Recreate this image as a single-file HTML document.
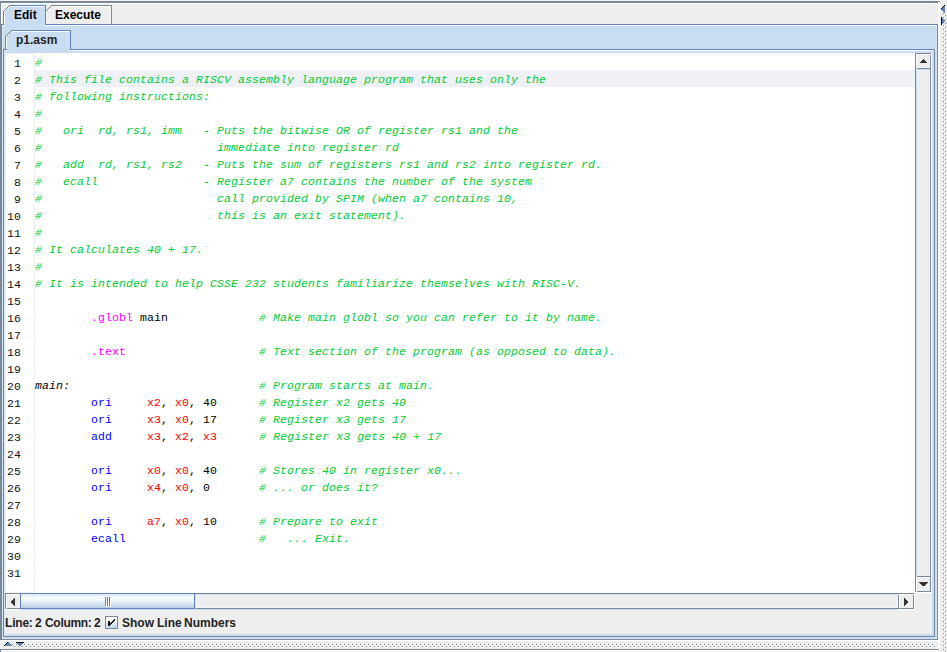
<!DOCTYPE html>
<html><head><meta charset="utf-8"><style>
html,body{margin:0;padding:0}
body{width:947px;height:652px;overflow:hidden;position:relative;background:#eeeeee}
i{position:absolute;display:block}
b{font-weight:normal}
.ln{position:absolute;height:17px;line-height:17px;font:11.5px "Liberation Mono",monospace;letter-spacing:0.099px;color:#111;white-space:pre}
.cl{position:absolute;left:35px;height:17px;line-height:17px;font:11.5px "Liberation Mono",monospace;letter-spacing:0.099px;color:#000;white-space:pre}
.c{color:#00cc33;font-style:italic}
.n{color:#0000ff} .d{color:#ff00ff} .r{color:#ff0000} .l{color:#000;font-style:italic}
.st,.tb{position:absolute;font:bold 12px "Liberation Sans",sans-serif;color:#222;white-space:pre;line-height:24px}
</style></head><body>
<i style="left:0px;top:0px;width:947px;height:1px;background:#f4f3f1;"></i>
<i style="left:0px;top:1px;width:940px;height:1px;background:#7a8a99;"></i>
<i style="left:0px;top:2px;width:938px;height:1px;background:#7a8a99;"></i>
<i style="left:0px;top:1px;width:1px;height:639px;background:#7a8a99;"></i>
<i style="left:1px;top:3px;width:937px;height:1px;background:#ffffff;"></i>
<i style="left:1px;top:3px;width:1px;height:21px;background:#ffffff;"></i>
<i style="left:938px;top:2px;width:1px;height:648px;background:#ffffff;"></i>
<i style="left:939px;top:3px;width:1px;height:647px;background:#ffffff;"></i>
<i style="left:1px;top:24px;width:937px;height:616px;background:#c8ddf2;"></i>
<i style="left:1px;top:24px;width:4px;height:1px;background:#6382bf;"></i>
<i style="left:45px;top:24px;width:893px;height:1px;background:#6382bf;"></i>
<i style="left:1px;top:24px;width:1px;height:616px;background:#6382bf;"></i>
<i style="left:937px;top:24px;width:1px;height:616px;background:#7a8a99;"></i>
<i style="left:1px;top:639px;width:937px;height:1px;background:#7a8a99;"></i>
<i style="left:2px;top:25px;width:3px;height:1px;background:#ffffff;"></i>
<i style="left:45px;top:25px;width:892px;height:1px;background:#ffffff;"></i>
<i style="left:2px;top:26px;width:1px;height:613px;background:#dbe8f5;"></i>
<i style="left:936px;top:25px;width:1px;height:614px;background:#d0e3f7;"></i>
<i style="left:2px;top:638px;width:935px;height:1px;background:#d0e3f7;"></i>
<i style="left:3px;top:11px;width:1px;height:14px;background:#6382bf;"></i>
<i style="left:3px;top:11px;width:1px;height:1px;background:#6382bf;"></i>
<i style="left:4px;top:10px;width:1px;height:1px;background:#6382bf;"></i>
<i style="left:5px;top:9px;width:1px;height:1px;background:#6382bf;"></i>
<i style="left:6px;top:8px;width:1px;height:1px;background:#6382bf;"></i>
<i style="left:7px;top:7px;width:1px;height:1px;background:#6382bf;"></i>
<i style="left:8px;top:6px;width:1px;height:1px;background:#6382bf;"></i>
<i style="left:9px;top:5px;width:37px;height:1px;background:#6382bf;"></i>
<i style="left:45px;top:5px;width:1px;height:20px;background:#6382bf;"></i>
<i style="left:9px;top:6px;width:36px;height:1px;background:#c8ddf2;"></i>
<i style="left:8px;top:7px;width:37px;height:1px;background:#c8ddf2;"></i>
<i style="left:7px;top:8px;width:38px;height:1px;background:#c8ddf2;"></i>
<i style="left:6px;top:9px;width:39px;height:1px;background:#c8ddf2;"></i>
<i style="left:5px;top:10px;width:40px;height:1px;background:#c8ddf2;"></i>
<i style="left:4px;top:11px;width:41px;height:1px;background:#c8ddf2;"></i>
<i style="left:4px;top:12px;width:41px;height:1px;background:#c8ddf2;"></i>
<i style="left:4px;top:13px;width:41px;height:1px;background:#c8ddf2;"></i>
<i style="left:4px;top:14px;width:41px;height:1px;background:#c8ddf2;"></i>
<i style="left:4px;top:15px;width:41px;height:1px;background:#c8ddf2;"></i>
<i style="left:4px;top:16px;width:41px;height:1px;background:#c8ddf2;"></i>
<i style="left:4px;top:17px;width:41px;height:1px;background:#c8ddf2;"></i>
<i style="left:4px;top:18px;width:41px;height:1px;background:#c8ddf2;"></i>
<i style="left:4px;top:19px;width:41px;height:1px;background:#c8ddf2;"></i>
<i style="left:4px;top:20px;width:41px;height:1px;background:#c8ddf2;"></i>
<i style="left:4px;top:21px;width:41px;height:1px;background:#c8ddf2;"></i>
<i style="left:4px;top:22px;width:41px;height:1px;background:#c8ddf2;"></i>
<i style="left:4px;top:23px;width:41px;height:1px;background:#c8ddf2;"></i>
<i style="left:4px;top:24px;width:41px;height:1px;background:#c8ddf2;"></i>
<i style="left:9px;top:6px;width:36px;height:1px;background:#ffffff;"></i>
<i style="left:4px;top:11px;width:1px;height:13px;background:#ffffff;"></i>
<i style="left:4px;top:11px;width:1px;height:1px;background:#ffffff;"></i>
<i style="left:5px;top:10px;width:1px;height:1px;background:#ffffff;"></i>
<i style="left:6px;top:9px;width:1px;height:1px;background:#ffffff;"></i>
<i style="left:7px;top:8px;width:1px;height:1px;background:#ffffff;"></i>
<i style="left:8px;top:7px;width:1px;height:1px;background:#ffffff;"></i>
<i style="left:46px;top:10px;width:1px;height:1px;background:#7a8a99;"></i>
<i style="left:47px;top:9px;width:1px;height:1px;background:#7a8a99;"></i>
<i style="left:48px;top:8px;width:1px;height:1px;background:#7a8a99;"></i>
<i style="left:49px;top:7px;width:1px;height:1px;background:#7a8a99;"></i>
<i style="left:50px;top:6px;width:1px;height:1px;background:#7a8a99;"></i>
<i style="left:51px;top:5px;width:61px;height:1px;background:#7a8a99;"></i>
<i style="left:111px;top:5px;width:1px;height:19px;background:#7a8a99;"></i>
<i style="left:51px;top:6px;width:60px;height:1px;background:#ffffff;"></i>
<i style="left:46px;top:11px;width:1px;height:13px;background:#f8f8f8;"></i>
<i style="left:110px;top:6px;width:1px;height:18px;background:#f6f6f6;"></i>
<i style="left:3px;top:49px;width:4px;height:1px;background:#6382bf;"></i>
<i style="left:70px;top:49px;width:865px;height:1px;background:#6382bf;"></i>
<i style="left:3px;top:49px;width:1px;height:588px;background:#6382bf;"></i>
<i style="left:934px;top:49px;width:1px;height:588px;background:#7a8a99;"></i>
<i style="left:3px;top:636px;width:932px;height:1px;background:#7a8a99;"></i>
<i style="left:4px;top:50px;width:3px;height:1px;background:#ffffff;"></i>
<i style="left:70px;top:50px;width:864px;height:1px;background:#ffffff;"></i>
<i style="left:4px;top:51px;width:1px;height:585px;background:#dbe8f5;"></i>
<i style="left:5px;top:36px;width:1px;height:13px;background:#6382bf;"></i>
<i style="left:5px;top:36px;width:1px;height:1px;background:#6382bf;"></i>
<i style="left:6px;top:35px;width:1px;height:1px;background:#6382bf;"></i>
<i style="left:7px;top:34px;width:1px;height:1px;background:#6382bf;"></i>
<i style="left:8px;top:33px;width:1px;height:1px;background:#6382bf;"></i>
<i style="left:9px;top:32px;width:1px;height:1px;background:#6382bf;"></i>
<i style="left:10px;top:31px;width:1px;height:1px;background:#6382bf;"></i>
<i style="left:11px;top:30px;width:60px;height:1px;background:#6382bf;"></i>
<i style="left:70px;top:30px;width:1px;height:20px;background:#6382bf;"></i>
<i style="left:11px;top:31px;width:59px;height:1px;background:#c8ddf2;"></i>
<i style="left:10px;top:32px;width:60px;height:1px;background:#c8ddf2;"></i>
<i style="left:9px;top:33px;width:61px;height:1px;background:#c8ddf2;"></i>
<i style="left:8px;top:34px;width:62px;height:1px;background:#c8ddf2;"></i>
<i style="left:7px;top:35px;width:63px;height:1px;background:#c8ddf2;"></i>
<i style="left:6px;top:36px;width:64px;height:1px;background:#c8ddf2;"></i>
<i style="left:6px;top:37px;width:64px;height:1px;background:#c8ddf2;"></i>
<i style="left:6px;top:38px;width:64px;height:1px;background:#c8ddf2;"></i>
<i style="left:6px;top:39px;width:64px;height:1px;background:#c8ddf2;"></i>
<i style="left:6px;top:40px;width:64px;height:1px;background:#c8ddf2;"></i>
<i style="left:6px;top:41px;width:64px;height:1px;background:#c8ddf2;"></i>
<i style="left:6px;top:42px;width:64px;height:1px;background:#c8ddf2;"></i>
<i style="left:6px;top:43px;width:64px;height:1px;background:#c8ddf2;"></i>
<i style="left:6px;top:44px;width:64px;height:1px;background:#c8ddf2;"></i>
<i style="left:6px;top:45px;width:64px;height:1px;background:#c8ddf2;"></i>
<i style="left:6px;top:46px;width:64px;height:1px;background:#c8ddf2;"></i>
<i style="left:6px;top:47px;width:64px;height:1px;background:#c8ddf2;"></i>
<i style="left:6px;top:48px;width:64px;height:1px;background:#c8ddf2;"></i>
<i style="left:11px;top:31px;width:59px;height:1px;background:#ffffff;"></i>
<i style="left:6px;top:36px;width:1px;height:13px;background:#ffffff;"></i>
<i style="left:6px;top:36px;width:1px;height:1px;background:#ffffff;"></i>
<i style="left:7px;top:35px;width:1px;height:1px;background:#ffffff;"></i>
<i style="left:8px;top:34px;width:1px;height:1px;background:#ffffff;"></i>
<i style="left:9px;top:33px;width:1px;height:1px;background:#ffffff;"></i>
<i style="left:10px;top:32px;width:1px;height:1px;background:#ffffff;"></i>
<i style="left:5px;top:53px;width:927px;height:581px;background:#eeeeee;"></i>
<i style="left:5px;top:51px;width:929px;height:2px;background:#c8ddf2;"></i>
<i style="left:932px;top:51px;width:2px;height:585px;background:#c8ddf2;"></i>
<i style="left:5px;top:634px;width:929px;height:2px;background:#c8ddf2;"></i>
<i style="left:6px;top:51px;width:1px;height:2px;background:#c8ddf2;"></i>
<i style="left:5px;top:53px;width:910px;height:540px;background:#ffffff;"></i>
<i style="left:5px;top:53px;width:29px;height:1px;background:#f1efeb;"></i>
<i style="left:5px;top:592px;width:29px;height:1px;background:#f3f1ed;"></i>
<i style="left:5px;top:53px;width:1px;height:540px;background:#f3f1ed;"></i>
<i style="left:34px;top:53px;width:1px;height:540px;background:#eeeeee;"></i>
<i style="left:35px;top:70px;width:880px;height:17px;background:#eff1f6;"></i>
<div class=ln style="top:57px;left:14px">1</div>
<div class=ln style="top:74px;left:14px">2</div>
<div class=ln style="top:91px;left:14px">3</div>
<div class=ln style="top:108px;left:14px">4</div>
<div class=ln style="top:125px;left:14px">5</div>
<div class=ln style="top:142px;left:14px">6</div>
<div class=ln style="top:159px;left:14px">7</div>
<div class=ln style="top:176px;left:14px">8</div>
<div class=ln style="top:193px;left:14px">9</div>
<div class=ln style="top:210px;left:7px">10</div>
<div class=ln style="top:227px;left:7px">11</div>
<div class=ln style="top:244px;left:7px">12</div>
<div class=ln style="top:261px;left:7px">13</div>
<div class=ln style="top:278px;left:7px">14</div>
<div class=ln style="top:295px;left:7px">15</div>
<div class=ln style="top:312px;left:7px">16</div>
<div class=ln style="top:329px;left:7px">17</div>
<div class=ln style="top:346px;left:7px">18</div>
<div class=ln style="top:363px;left:7px">19</div>
<div class=ln style="top:380px;left:7px">20</div>
<div class=ln style="top:397px;left:7px">21</div>
<div class=ln style="top:414px;left:7px">22</div>
<div class=ln style="top:431px;left:7px">23</div>
<div class=ln style="top:448px;left:7px">24</div>
<div class=ln style="top:465px;left:7px">25</div>
<div class=ln style="top:482px;left:7px">26</div>
<div class=ln style="top:499px;left:7px">27</div>
<div class=ln style="top:516px;left:7px">28</div>
<div class=ln style="top:533px;left:7px">29</div>
<div class=ln style="top:550px;left:7px">30</div>
<div class=ln style="top:567px;left:7px">31</div>
<div class=cl style="top:56px"><b class=c>#</b></div>
<div class=cl style="top:73px"><b class=c># This file contains a RISCV assembly language program that uses only the</b></div>
<div class=cl style="top:90px"><b class=c># following instructions:</b></div>
<div class=cl style="top:107px"><b class=c>#</b></div>
<div class=cl style="top:124px"><b class=c>#   ori  rd, rs1, imm   - Puts the bitwise OR of register rs1 and the</b></div>
<div class=cl style="top:141px"><b class=c>#                         immediate into register rd</b></div>
<div class=cl style="top:158px"><b class=c>#   add  rd, rs1, rs2   - Puts the sum of registers rs1 and rs2 into register rd.</b></div>
<div class=cl style="top:175px"><b class=c>#   ecall               - Register a7 contains the number of the system</b></div>
<div class=cl style="top:192px"><b class=c>#                         call provided by SPIM (when a7 contains 10,</b></div>
<div class=cl style="top:209px"><b class=c>#                         this is an exit statement).</b></div>
<div class=cl style="top:226px"><b class=c>#</b></div>
<div class=cl style="top:243px"><b class=c># It calculates 40 + 17.</b></div>
<div class=cl style="top:260px"><b class=c>#</b></div>
<div class=cl style="top:277px"><b class=c># It is intended to help CSSE 232 students familiarize themselves with RISC-V.</b></div>
<div class=cl style="top:311px">        <b class=d>.globl</b> main             <b class=c># Make main globl so you can refer to it by name.</b></div>
<div class=cl style="top:345px">        <b class=d>.text</b>                   <b class=c># Text section of the program (as opposed to data).</b></div>
<div class=cl style="top:379px"><b class=l>main:</b>                           <b class=c># Program starts at main.</b></div>
<div class=cl style="top:396px">        <b class=n>ori</b>     <b class=r>x2</b>, <b class=r>x0</b>, 40      <b class=c># Register x2 gets 40</b></div>
<div class=cl style="top:413px">        <b class=n>ori</b>     <b class=r>x3</b>, <b class=r>x0</b>, 17      <b class=c># Register x3 gets 17</b></div>
<div class=cl style="top:430px">        <b class=n>add</b>     <b class=r>x3</b>, <b class=r>x2</b>, <b class=r>x3</b>      <b class=c># Register x3 gets 40 + 17</b></div>
<div class=cl style="top:464px">        <b class=n>ori</b>     <b class=r>x0</b>, <b class=r>x0</b>, 40      <b class=c># Stores 40 in register x0...</b></div>
<div class=cl style="top:481px">        <b class=n>ori</b>     <b class=r>x4</b>, <b class=r>x0</b>, 0       <b class=c># ... or does it?</b></div>
<div class=cl style="top:515px">        <b class=n>ori</b>     <b class=r>a7</b>, <b class=r>x0</b>, 10      <b class=c># Prepare to exit</b></div>
<div class=cl style="top:532px">        <b class=n>ecall</b>                   <b class=c>#   ... Exit.</b></div>
<i style="left:915px;top:53px;width:16px;height:539px;background:#eeeeee;"></i>
<i style="left:915px;top:53px;width:1px;height:539px;background:#7a8a99;"></i>
<i style="left:915px;top:53px;width:16px;height:1px;background:#7a8a99;"></i>
<i style="left:930px;top:55px;width:1px;height:537px;background:#7a8a99;"></i>
<i style="left:931px;top:53px;width:1px;height:540px;background:#ffffff;"></i>
<i style="left:915px;top:592px;width:17px;height:1px;background:#ffffff;"></i>
<i style="left:916px;top:69px;width:1px;height:507px;background:#c8ddf2;"></i>
<i style="left:916px;top:54px;width:15px;height:1px;background:#ffffff;"></i>
<i style="left:916px;top:54px;width:1px;height:15px;background:#ffffff;"></i>
<i style="left:917px;top:68px;width:14px;height:1px;background:#7a8a99;"></i>
<i style="left:917px;top:69px;width:13px;height:1px;background:#c8ddf2;"></i>
<i style="left:923px;top:59px;width:1px;height:1px;background:#333333;"></i>
<i style="left:922px;top:60px;width:3px;height:1px;background:#333333;"></i>
<i style="left:921px;top:61px;width:5px;height:1px;background:#333333;"></i>
<i style="left:920px;top:62px;width:7px;height:1px;background:#333333;"></i>
<i style="left:917px;top:576px;width:14px;height:1px;background:#7a8a99;"></i>
<i style="left:916px;top:577px;width:14px;height:1px;background:#ffffff;"></i>
<i style="left:916px;top:577px;width:1px;height:15px;background:#ffffff;"></i>
<i style="left:917px;top:591px;width:14px;height:1px;background:#7a8a99;"></i>
<i style="left:919px;top:582px;width:9px;height:1px;background:#333333;"></i>
<i style="left:920px;top:583px;width:7px;height:1px;background:#333333;"></i>
<i style="left:921px;top:584px;width:5px;height:1px;background:#333333;"></i>
<i style="left:922px;top:585px;width:3px;height:1px;background:#333333;"></i>
<i style="left:5px;top:593px;width:909px;height:16px;background:#eeeeee;"></i>
<i style="left:5px;top:593px;width:909px;height:1px;background:#7a8a99;"></i>
<i style="left:20px;top:594px;width:878px;height:1px;background:#c8ddf2;"></i>
<i style="left:20px;top:609px;width:878px;height:1px;background:#c8ddf2;"></i>
<i style="left:196px;top:608px;width:702px;height:1px;background:#7a8a99;"></i>
<i style="left:195px;top:594px;width:1px;height:16px;background:#c8ddf2;"></i>
<i style="left:196px;top:595px;width:1px;height:13px;background:#f8f8f8;"></i>
<i style="left:196px;top:595px;width:702px;height:1px;background:#f5f5f5;"></i>
<i style="left:196px;top:607px;width:702px;height:1px;background:#f5f5f5;"></i>
<i style="left:897px;top:595px;width:1px;height:13px;background:#f5f5f5;"></i>
<i style="left:5px;top:593px;width:1px;height:16px;background:#7a8a99;"></i>
<i style="left:6px;top:594px;width:14px;height:1px;background:#ffffff;"></i>
<i style="left:6px;top:594px;width:1px;height:15px;background:#ffffff;"></i>
<i style="left:7px;top:608px;width:13px;height:1px;background:#7a8a99;"></i>
<i style="left:5px;top:609px;width:15px;height:1px;background:#ffffff;"></i>
<i style="left:11px;top:601px;width:1px;height:2px;background:#333333;"></i>
<i style="left:12px;top:600px;width:1px;height:4px;background:#333333;"></i>
<i style="left:13px;top:599px;width:1px;height:6px;background:#333333;"></i>
<i style="left:14px;top:598px;width:1px;height:8px;background:#333333;"></i>
<i style="left:898px;top:595px;width:1px;height:14px;background:#7a8a99;"></i>
<i style="left:899px;top:594px;width:14px;height:1px;background:#ffffff;"></i>
<i style="left:899px;top:594px;width:1px;height:14px;background:#ffffff;"></i>
<i style="left:913px;top:595px;width:1px;height:14px;background:#7a8a99;"></i>
<i style="left:898px;top:608px;width:16px;height:1px;background:#7a8a99;"></i>
<i style="left:898px;top:609px;width:17px;height:1px;background:#ffffff;"></i>
<i style="left:914px;top:594px;width:1px;height:16px;background:#ffffff;"></i>
<i style="left:907px;top:601px;width:1px;height:2px;background:#333333;"></i>
<i style="left:906px;top:600px;width:1px;height:4px;background:#333333;"></i>
<i style="left:905px;top:599px;width:1px;height:6px;background:#333333;"></i>
<i style="left:904px;top:598px;width:1px;height:8px;background:#333333;"></i>
<i style="left:20px;top:593px;width:173px;height:14px;border:1px solid #6382bf;background:linear-gradient(#dde8f3 0px,#ffffff 4.5px,#dde8f3 9px,#b8cfe5 14px)"></i>
<i style="left:105px;top:597px;width:1px;height:9px;background:#6382bf;"></i>
<i style="left:106px;top:598px;width:1px;height:9px;background:#ffffff;"></i>
<i style="left:105px;top:596px;width:1px;height:1px;background:#f4f8fc;"></i>
<i style="left:107px;top:597px;width:1px;height:9px;background:#6382bf;"></i>
<i style="left:108px;top:598px;width:1px;height:9px;background:#ffffff;"></i>
<i style="left:107px;top:596px;width:1px;height:1px;background:#f4f8fc;"></i>
<i style="left:109px;top:597px;width:1px;height:9px;background:#6382bf;"></i>
<i style="left:110px;top:598px;width:1px;height:9px;background:#ffffff;"></i>
<i style="left:109px;top:596px;width:1px;height:1px;background:#f4f8fc;"></i>
<div class=st style="left:5px;top:611px;letter-spacing:-0.2px">Line:</div>
<div class=st style="left:35px;top:611px;letter-spacing:0px">2</div>
<div class=st style="left:45px;top:611px;letter-spacing:-0.3px">Column:</div>
<div class=st style="left:94px;top:611px;letter-spacing:0px">2</div>
<div class=st style="left:122px;top:611px;letter-spacing:0px">Show</div>
<div class=st style="left:157px;top:611px;letter-spacing:0px">Line</div>
<div class=st style="left:184px;top:611px;letter-spacing:0px">Numbers</div>
<i style="left:105px;top:616px;width:13px;height:13px;background:#7a8a99;"></i>
<i style="left:106px;top:617px;width:11px;height:11px;background:linear-gradient(#ffffff 0px,#ffffff 3px,#dde8f3 7px,#c4d8ec 11px)"></i>
<i style="left:108px;top:621px;width:2px;height:5px;background:#111;"></i>
<i style="left:114px;top:619px;width:1px;height:1px;background:#111;"></i>
<i style="left:114px;top:620px;width:1px;height:1px;background:#111;"></i>
<i style="left:113px;top:620px;width:1px;height:1px;background:#111;"></i>
<i style="left:113px;top:621px;width:1px;height:1px;background:#111;"></i>
<i style="left:112px;top:621px;width:1px;height:1px;background:#111;"></i>
<i style="left:112px;top:622px;width:1px;height:1px;background:#111;"></i>
<i style="left:111px;top:622px;width:1px;height:1px;background:#111;"></i>
<i style="left:111px;top:623px;width:1px;height:1px;background:#111;"></i>
<i style="left:110px;top:623px;width:1px;height:1px;background:#111;"></i>
<i style="left:110px;top:624px;width:1px;height:1px;background:#111;"></i>
<i style="left:943px;top:13px;width:1px;height:1px;background:#7a8a99;"></i>
<i style="left:945px;top:15px;width:1px;height:1px;background:#7a8a99;"></i>
<i style="left:943px;top:17px;width:1px;height:1px;background:#7a8a99;"></i>
<i style="left:945px;top:19px;width:1px;height:1px;background:#7a8a99;"></i>
<i style="left:943px;top:21px;width:1px;height:1px;background:#7a8a99;"></i>
<i style="left:945px;top:23px;width:1px;height:1px;background:#7a8a99;"></i>
<i style="left:943px;top:25px;width:1px;height:1px;background:#7a8a99;"></i>
<i style="left:945px;top:27px;width:1px;height:1px;background:#7a8a99;"></i>
<i style="left:943px;top:29px;width:1px;height:1px;background:#7a8a99;"></i>
<i style="left:945px;top:31px;width:1px;height:1px;background:#7a8a99;"></i>
<i style="left:943px;top:33px;width:1px;height:1px;background:#7a8a99;"></i>
<i style="left:945px;top:35px;width:1px;height:1px;background:#7a8a99;"></i>
<i style="left:943px;top:37px;width:1px;height:1px;background:#7a8a99;"></i>
<i style="left:945px;top:39px;width:1px;height:1px;background:#7a8a99;"></i>
<i style="left:943px;top:41px;width:1px;height:1px;background:#7a8a99;"></i>
<i style="left:945px;top:43px;width:1px;height:1px;background:#7a8a99;"></i>
<i style="left:943px;top:45px;width:1px;height:1px;background:#7a8a99;"></i>
<i style="left:945px;top:47px;width:1px;height:1px;background:#7a8a99;"></i>
<i style="left:943px;top:49px;width:1px;height:1px;background:#7a8a99;"></i>
<i style="left:945px;top:51px;width:1px;height:1px;background:#7a8a99;"></i>
<i style="left:943px;top:53px;width:1px;height:1px;background:#7a8a99;"></i>
<i style="left:945px;top:55px;width:1px;height:1px;background:#7a8a99;"></i>
<i style="left:943px;top:57px;width:1px;height:1px;background:#7a8a99;"></i>
<i style="left:945px;top:59px;width:1px;height:1px;background:#7a8a99;"></i>
<i style="left:943px;top:61px;width:1px;height:1px;background:#7a8a99;"></i>
<i style="left:945px;top:63px;width:1px;height:1px;background:#7a8a99;"></i>
<i style="left:943px;top:65px;width:1px;height:1px;background:#7a8a99;"></i>
<i style="left:945px;top:67px;width:1px;height:1px;background:#7a8a99;"></i>
<i style="left:943px;top:69px;width:1px;height:1px;background:#7a8a99;"></i>
<i style="left:945px;top:71px;width:1px;height:1px;background:#7a8a99;"></i>
<i style="left:943px;top:73px;width:1px;height:1px;background:#7a8a99;"></i>
<i style="left:945px;top:75px;width:1px;height:1px;background:#7a8a99;"></i>
<i style="left:943px;top:77px;width:1px;height:1px;background:#7a8a99;"></i>
<i style="left:945px;top:79px;width:1px;height:1px;background:#7a8a99;"></i>
<i style="left:943px;top:81px;width:1px;height:1px;background:#7a8a99;"></i>
<i style="left:945px;top:83px;width:1px;height:1px;background:#7a8a99;"></i>
<i style="left:943px;top:85px;width:1px;height:1px;background:#7a8a99;"></i>
<i style="left:945px;top:87px;width:1px;height:1px;background:#7a8a99;"></i>
<i style="left:943px;top:89px;width:1px;height:1px;background:#7a8a99;"></i>
<i style="left:945px;top:91px;width:1px;height:1px;background:#7a8a99;"></i>
<i style="left:943px;top:93px;width:1px;height:1px;background:#7a8a99;"></i>
<i style="left:945px;top:95px;width:1px;height:1px;background:#7a8a99;"></i>
<i style="left:943px;top:97px;width:1px;height:1px;background:#7a8a99;"></i>
<i style="left:945px;top:99px;width:1px;height:1px;background:#7a8a99;"></i>
<i style="left:943px;top:101px;width:1px;height:1px;background:#7a8a99;"></i>
<i style="left:945px;top:103px;width:1px;height:1px;background:#7a8a99;"></i>
<i style="left:943px;top:105px;width:1px;height:1px;background:#7a8a99;"></i>
<i style="left:945px;top:107px;width:1px;height:1px;background:#7a8a99;"></i>
<i style="left:943px;top:109px;width:1px;height:1px;background:#7a8a99;"></i>
<i style="left:945px;top:111px;width:1px;height:1px;background:#7a8a99;"></i>
<i style="left:943px;top:113px;width:1px;height:1px;background:#7a8a99;"></i>
<i style="left:945px;top:115px;width:1px;height:1px;background:#7a8a99;"></i>
<i style="left:943px;top:117px;width:1px;height:1px;background:#7a8a99;"></i>
<i style="left:945px;top:119px;width:1px;height:1px;background:#7a8a99;"></i>
<i style="left:943px;top:121px;width:1px;height:1px;background:#7a8a99;"></i>
<i style="left:945px;top:123px;width:1px;height:1px;background:#7a8a99;"></i>
<i style="left:943px;top:125px;width:1px;height:1px;background:#7a8a99;"></i>
<i style="left:945px;top:127px;width:1px;height:1px;background:#7a8a99;"></i>
<i style="left:943px;top:129px;width:1px;height:1px;background:#7a8a99;"></i>
<i style="left:945px;top:131px;width:1px;height:1px;background:#7a8a99;"></i>
<i style="left:943px;top:133px;width:1px;height:1px;background:#7a8a99;"></i>
<i style="left:945px;top:135px;width:1px;height:1px;background:#7a8a99;"></i>
<i style="left:943px;top:137px;width:1px;height:1px;background:#7a8a99;"></i>
<i style="left:945px;top:139px;width:1px;height:1px;background:#7a8a99;"></i>
<i style="left:943px;top:141px;width:1px;height:1px;background:#7a8a99;"></i>
<i style="left:945px;top:143px;width:1px;height:1px;background:#7a8a99;"></i>
<i style="left:943px;top:145px;width:1px;height:1px;background:#7a8a99;"></i>
<i style="left:945px;top:147px;width:1px;height:1px;background:#7a8a99;"></i>
<i style="left:943px;top:149px;width:1px;height:1px;background:#7a8a99;"></i>
<i style="left:945px;top:151px;width:1px;height:1px;background:#7a8a99;"></i>
<i style="left:943px;top:153px;width:1px;height:1px;background:#7a8a99;"></i>
<i style="left:945px;top:155px;width:1px;height:1px;background:#7a8a99;"></i>
<i style="left:943px;top:157px;width:1px;height:1px;background:#7a8a99;"></i>
<i style="left:945px;top:159px;width:1px;height:1px;background:#7a8a99;"></i>
<i style="left:943px;top:161px;width:1px;height:1px;background:#7a8a99;"></i>
<i style="left:945px;top:163px;width:1px;height:1px;background:#7a8a99;"></i>
<i style="left:943px;top:165px;width:1px;height:1px;background:#7a8a99;"></i>
<i style="left:945px;top:167px;width:1px;height:1px;background:#7a8a99;"></i>
<i style="left:943px;top:169px;width:1px;height:1px;background:#7a8a99;"></i>
<i style="left:945px;top:171px;width:1px;height:1px;background:#7a8a99;"></i>
<i style="left:943px;top:173px;width:1px;height:1px;background:#7a8a99;"></i>
<i style="left:945px;top:175px;width:1px;height:1px;background:#7a8a99;"></i>
<i style="left:943px;top:177px;width:1px;height:1px;background:#7a8a99;"></i>
<i style="left:945px;top:179px;width:1px;height:1px;background:#7a8a99;"></i>
<i style="left:943px;top:181px;width:1px;height:1px;background:#7a8a99;"></i>
<i style="left:945px;top:183px;width:1px;height:1px;background:#7a8a99;"></i>
<i style="left:943px;top:185px;width:1px;height:1px;background:#7a8a99;"></i>
<i style="left:945px;top:187px;width:1px;height:1px;background:#7a8a99;"></i>
<i style="left:943px;top:189px;width:1px;height:1px;background:#7a8a99;"></i>
<i style="left:945px;top:191px;width:1px;height:1px;background:#7a8a99;"></i>
<i style="left:943px;top:193px;width:1px;height:1px;background:#7a8a99;"></i>
<i style="left:945px;top:195px;width:1px;height:1px;background:#7a8a99;"></i>
<i style="left:943px;top:197px;width:1px;height:1px;background:#7a8a99;"></i>
<i style="left:945px;top:199px;width:1px;height:1px;background:#7a8a99;"></i>
<i style="left:943px;top:201px;width:1px;height:1px;background:#7a8a99;"></i>
<i style="left:945px;top:203px;width:1px;height:1px;background:#7a8a99;"></i>
<i style="left:943px;top:205px;width:1px;height:1px;background:#7a8a99;"></i>
<i style="left:945px;top:207px;width:1px;height:1px;background:#7a8a99;"></i>
<i style="left:943px;top:209px;width:1px;height:1px;background:#7a8a99;"></i>
<i style="left:945px;top:211px;width:1px;height:1px;background:#7a8a99;"></i>
<i style="left:943px;top:213px;width:1px;height:1px;background:#7a8a99;"></i>
<i style="left:945px;top:215px;width:1px;height:1px;background:#7a8a99;"></i>
<i style="left:943px;top:217px;width:1px;height:1px;background:#7a8a99;"></i>
<i style="left:945px;top:219px;width:1px;height:1px;background:#7a8a99;"></i>
<i style="left:943px;top:221px;width:1px;height:1px;background:#7a8a99;"></i>
<i style="left:945px;top:223px;width:1px;height:1px;background:#7a8a99;"></i>
<i style="left:943px;top:225px;width:1px;height:1px;background:#7a8a99;"></i>
<i style="left:945px;top:227px;width:1px;height:1px;background:#7a8a99;"></i>
<i style="left:943px;top:229px;width:1px;height:1px;background:#7a8a99;"></i>
<i style="left:945px;top:231px;width:1px;height:1px;background:#7a8a99;"></i>
<i style="left:943px;top:233px;width:1px;height:1px;background:#7a8a99;"></i>
<i style="left:945px;top:235px;width:1px;height:1px;background:#7a8a99;"></i>
<i style="left:943px;top:237px;width:1px;height:1px;background:#7a8a99;"></i>
<i style="left:945px;top:239px;width:1px;height:1px;background:#7a8a99;"></i>
<i style="left:943px;top:241px;width:1px;height:1px;background:#7a8a99;"></i>
<i style="left:945px;top:243px;width:1px;height:1px;background:#7a8a99;"></i>
<i style="left:943px;top:245px;width:1px;height:1px;background:#7a8a99;"></i>
<i style="left:945px;top:247px;width:1px;height:1px;background:#7a8a99;"></i>
<i style="left:943px;top:249px;width:1px;height:1px;background:#7a8a99;"></i>
<i style="left:945px;top:251px;width:1px;height:1px;background:#7a8a99;"></i>
<i style="left:943px;top:253px;width:1px;height:1px;background:#7a8a99;"></i>
<i style="left:945px;top:255px;width:1px;height:1px;background:#7a8a99;"></i>
<i style="left:943px;top:257px;width:1px;height:1px;background:#7a8a99;"></i>
<i style="left:945px;top:259px;width:1px;height:1px;background:#7a8a99;"></i>
<i style="left:943px;top:261px;width:1px;height:1px;background:#7a8a99;"></i>
<i style="left:945px;top:263px;width:1px;height:1px;background:#7a8a99;"></i>
<i style="left:943px;top:265px;width:1px;height:1px;background:#7a8a99;"></i>
<i style="left:945px;top:267px;width:1px;height:1px;background:#7a8a99;"></i>
<i style="left:943px;top:269px;width:1px;height:1px;background:#7a8a99;"></i>
<i style="left:945px;top:271px;width:1px;height:1px;background:#7a8a99;"></i>
<i style="left:943px;top:273px;width:1px;height:1px;background:#7a8a99;"></i>
<i style="left:945px;top:275px;width:1px;height:1px;background:#7a8a99;"></i>
<i style="left:943px;top:277px;width:1px;height:1px;background:#7a8a99;"></i>
<i style="left:945px;top:279px;width:1px;height:1px;background:#7a8a99;"></i>
<i style="left:943px;top:281px;width:1px;height:1px;background:#7a8a99;"></i>
<i style="left:945px;top:283px;width:1px;height:1px;background:#7a8a99;"></i>
<i style="left:943px;top:285px;width:1px;height:1px;background:#7a8a99;"></i>
<i style="left:945px;top:287px;width:1px;height:1px;background:#7a8a99;"></i>
<i style="left:943px;top:289px;width:1px;height:1px;background:#7a8a99;"></i>
<i style="left:945px;top:291px;width:1px;height:1px;background:#7a8a99;"></i>
<i style="left:943px;top:293px;width:1px;height:1px;background:#7a8a99;"></i>
<i style="left:945px;top:295px;width:1px;height:1px;background:#7a8a99;"></i>
<i style="left:943px;top:297px;width:1px;height:1px;background:#7a8a99;"></i>
<i style="left:945px;top:299px;width:1px;height:1px;background:#7a8a99;"></i>
<i style="left:943px;top:301px;width:1px;height:1px;background:#7a8a99;"></i>
<i style="left:945px;top:303px;width:1px;height:1px;background:#7a8a99;"></i>
<i style="left:943px;top:305px;width:1px;height:1px;background:#7a8a99;"></i>
<i style="left:945px;top:307px;width:1px;height:1px;background:#7a8a99;"></i>
<i style="left:943px;top:309px;width:1px;height:1px;background:#7a8a99;"></i>
<i style="left:945px;top:311px;width:1px;height:1px;background:#7a8a99;"></i>
<i style="left:943px;top:313px;width:1px;height:1px;background:#7a8a99;"></i>
<i style="left:945px;top:315px;width:1px;height:1px;background:#7a8a99;"></i>
<i style="left:943px;top:317px;width:1px;height:1px;background:#7a8a99;"></i>
<i style="left:945px;top:319px;width:1px;height:1px;background:#7a8a99;"></i>
<i style="left:943px;top:321px;width:1px;height:1px;background:#7a8a99;"></i>
<i style="left:945px;top:323px;width:1px;height:1px;background:#7a8a99;"></i>
<i style="left:943px;top:325px;width:1px;height:1px;background:#7a8a99;"></i>
<i style="left:945px;top:327px;width:1px;height:1px;background:#7a8a99;"></i>
<i style="left:943px;top:329px;width:1px;height:1px;background:#7a8a99;"></i>
<i style="left:945px;top:331px;width:1px;height:1px;background:#7a8a99;"></i>
<i style="left:943px;top:333px;width:1px;height:1px;background:#7a8a99;"></i>
<i style="left:945px;top:335px;width:1px;height:1px;background:#7a8a99;"></i>
<i style="left:943px;top:337px;width:1px;height:1px;background:#7a8a99;"></i>
<i style="left:945px;top:339px;width:1px;height:1px;background:#7a8a99;"></i>
<i style="left:943px;top:341px;width:1px;height:1px;background:#7a8a99;"></i>
<i style="left:945px;top:343px;width:1px;height:1px;background:#7a8a99;"></i>
<i style="left:943px;top:345px;width:1px;height:1px;background:#7a8a99;"></i>
<i style="left:945px;top:347px;width:1px;height:1px;background:#7a8a99;"></i>
<i style="left:943px;top:349px;width:1px;height:1px;background:#7a8a99;"></i>
<i style="left:945px;top:351px;width:1px;height:1px;background:#7a8a99;"></i>
<i style="left:943px;top:353px;width:1px;height:1px;background:#7a8a99;"></i>
<i style="left:945px;top:355px;width:1px;height:1px;background:#7a8a99;"></i>
<i style="left:943px;top:357px;width:1px;height:1px;background:#7a8a99;"></i>
<i style="left:945px;top:359px;width:1px;height:1px;background:#7a8a99;"></i>
<i style="left:943px;top:361px;width:1px;height:1px;background:#7a8a99;"></i>
<i style="left:945px;top:363px;width:1px;height:1px;background:#7a8a99;"></i>
<i style="left:943px;top:365px;width:1px;height:1px;background:#7a8a99;"></i>
<i style="left:945px;top:367px;width:1px;height:1px;background:#7a8a99;"></i>
<i style="left:943px;top:369px;width:1px;height:1px;background:#7a8a99;"></i>
<i style="left:945px;top:371px;width:1px;height:1px;background:#7a8a99;"></i>
<i style="left:943px;top:373px;width:1px;height:1px;background:#7a8a99;"></i>
<i style="left:945px;top:375px;width:1px;height:1px;background:#7a8a99;"></i>
<i style="left:943px;top:377px;width:1px;height:1px;background:#7a8a99;"></i>
<i style="left:945px;top:379px;width:1px;height:1px;background:#7a8a99;"></i>
<i style="left:943px;top:381px;width:1px;height:1px;background:#7a8a99;"></i>
<i style="left:945px;top:383px;width:1px;height:1px;background:#7a8a99;"></i>
<i style="left:943px;top:385px;width:1px;height:1px;background:#7a8a99;"></i>
<i style="left:945px;top:387px;width:1px;height:1px;background:#7a8a99;"></i>
<i style="left:943px;top:389px;width:1px;height:1px;background:#7a8a99;"></i>
<i style="left:945px;top:391px;width:1px;height:1px;background:#7a8a99;"></i>
<i style="left:943px;top:393px;width:1px;height:1px;background:#7a8a99;"></i>
<i style="left:945px;top:395px;width:1px;height:1px;background:#7a8a99;"></i>
<i style="left:943px;top:397px;width:1px;height:1px;background:#7a8a99;"></i>
<i style="left:945px;top:399px;width:1px;height:1px;background:#7a8a99;"></i>
<i style="left:943px;top:401px;width:1px;height:1px;background:#7a8a99;"></i>
<i style="left:945px;top:403px;width:1px;height:1px;background:#7a8a99;"></i>
<i style="left:943px;top:405px;width:1px;height:1px;background:#7a8a99;"></i>
<i style="left:945px;top:407px;width:1px;height:1px;background:#7a8a99;"></i>
<i style="left:943px;top:409px;width:1px;height:1px;background:#7a8a99;"></i>
<i style="left:945px;top:411px;width:1px;height:1px;background:#7a8a99;"></i>
<i style="left:943px;top:413px;width:1px;height:1px;background:#7a8a99;"></i>
<i style="left:945px;top:415px;width:1px;height:1px;background:#7a8a99;"></i>
<i style="left:943px;top:417px;width:1px;height:1px;background:#7a8a99;"></i>
<i style="left:945px;top:419px;width:1px;height:1px;background:#7a8a99;"></i>
<i style="left:943px;top:421px;width:1px;height:1px;background:#7a8a99;"></i>
<i style="left:945px;top:423px;width:1px;height:1px;background:#7a8a99;"></i>
<i style="left:943px;top:425px;width:1px;height:1px;background:#7a8a99;"></i>
<i style="left:945px;top:427px;width:1px;height:1px;background:#7a8a99;"></i>
<i style="left:943px;top:429px;width:1px;height:1px;background:#7a8a99;"></i>
<i style="left:945px;top:431px;width:1px;height:1px;background:#7a8a99;"></i>
<i style="left:943px;top:433px;width:1px;height:1px;background:#7a8a99;"></i>
<i style="left:945px;top:435px;width:1px;height:1px;background:#7a8a99;"></i>
<i style="left:943px;top:437px;width:1px;height:1px;background:#7a8a99;"></i>
<i style="left:945px;top:439px;width:1px;height:1px;background:#7a8a99;"></i>
<i style="left:943px;top:441px;width:1px;height:1px;background:#7a8a99;"></i>
<i style="left:945px;top:443px;width:1px;height:1px;background:#7a8a99;"></i>
<i style="left:943px;top:445px;width:1px;height:1px;background:#7a8a99;"></i>
<i style="left:945px;top:447px;width:1px;height:1px;background:#7a8a99;"></i>
<i style="left:943px;top:449px;width:1px;height:1px;background:#7a8a99;"></i>
<i style="left:945px;top:451px;width:1px;height:1px;background:#7a8a99;"></i>
<i style="left:943px;top:453px;width:1px;height:1px;background:#7a8a99;"></i>
<i style="left:945px;top:455px;width:1px;height:1px;background:#7a8a99;"></i>
<i style="left:943px;top:457px;width:1px;height:1px;background:#7a8a99;"></i>
<i style="left:945px;top:459px;width:1px;height:1px;background:#7a8a99;"></i>
<i style="left:943px;top:461px;width:1px;height:1px;background:#7a8a99;"></i>
<i style="left:945px;top:463px;width:1px;height:1px;background:#7a8a99;"></i>
<i style="left:943px;top:465px;width:1px;height:1px;background:#7a8a99;"></i>
<i style="left:945px;top:467px;width:1px;height:1px;background:#7a8a99;"></i>
<i style="left:943px;top:469px;width:1px;height:1px;background:#7a8a99;"></i>
<i style="left:945px;top:471px;width:1px;height:1px;background:#7a8a99;"></i>
<i style="left:943px;top:473px;width:1px;height:1px;background:#7a8a99;"></i>
<i style="left:945px;top:475px;width:1px;height:1px;background:#7a8a99;"></i>
<i style="left:943px;top:477px;width:1px;height:1px;background:#7a8a99;"></i>
<i style="left:945px;top:479px;width:1px;height:1px;background:#7a8a99;"></i>
<i style="left:943px;top:481px;width:1px;height:1px;background:#7a8a99;"></i>
<i style="left:945px;top:483px;width:1px;height:1px;background:#7a8a99;"></i>
<i style="left:943px;top:485px;width:1px;height:1px;background:#7a8a99;"></i>
<i style="left:945px;top:487px;width:1px;height:1px;background:#7a8a99;"></i>
<i style="left:943px;top:489px;width:1px;height:1px;background:#7a8a99;"></i>
<i style="left:945px;top:491px;width:1px;height:1px;background:#7a8a99;"></i>
<i style="left:943px;top:493px;width:1px;height:1px;background:#7a8a99;"></i>
<i style="left:945px;top:495px;width:1px;height:1px;background:#7a8a99;"></i>
<i style="left:943px;top:497px;width:1px;height:1px;background:#7a8a99;"></i>
<i style="left:945px;top:499px;width:1px;height:1px;background:#7a8a99;"></i>
<i style="left:943px;top:501px;width:1px;height:1px;background:#7a8a99;"></i>
<i style="left:945px;top:503px;width:1px;height:1px;background:#7a8a99;"></i>
<i style="left:943px;top:505px;width:1px;height:1px;background:#7a8a99;"></i>
<i style="left:945px;top:507px;width:1px;height:1px;background:#7a8a99;"></i>
<i style="left:943px;top:509px;width:1px;height:1px;background:#7a8a99;"></i>
<i style="left:945px;top:511px;width:1px;height:1px;background:#7a8a99;"></i>
<i style="left:943px;top:513px;width:1px;height:1px;background:#7a8a99;"></i>
<i style="left:945px;top:515px;width:1px;height:1px;background:#7a8a99;"></i>
<i style="left:943px;top:517px;width:1px;height:1px;background:#7a8a99;"></i>
<i style="left:945px;top:519px;width:1px;height:1px;background:#7a8a99;"></i>
<i style="left:943px;top:521px;width:1px;height:1px;background:#7a8a99;"></i>
<i style="left:945px;top:523px;width:1px;height:1px;background:#7a8a99;"></i>
<i style="left:943px;top:525px;width:1px;height:1px;background:#7a8a99;"></i>
<i style="left:945px;top:527px;width:1px;height:1px;background:#7a8a99;"></i>
<i style="left:943px;top:529px;width:1px;height:1px;background:#7a8a99;"></i>
<i style="left:945px;top:531px;width:1px;height:1px;background:#7a8a99;"></i>
<i style="left:943px;top:533px;width:1px;height:1px;background:#7a8a99;"></i>
<i style="left:945px;top:535px;width:1px;height:1px;background:#7a8a99;"></i>
<i style="left:943px;top:537px;width:1px;height:1px;background:#7a8a99;"></i>
<i style="left:945px;top:539px;width:1px;height:1px;background:#7a8a99;"></i>
<i style="left:943px;top:541px;width:1px;height:1px;background:#7a8a99;"></i>
<i style="left:945px;top:543px;width:1px;height:1px;background:#7a8a99;"></i>
<i style="left:943px;top:545px;width:1px;height:1px;background:#7a8a99;"></i>
<i style="left:945px;top:547px;width:1px;height:1px;background:#7a8a99;"></i>
<i style="left:943px;top:549px;width:1px;height:1px;background:#7a8a99;"></i>
<i style="left:945px;top:551px;width:1px;height:1px;background:#7a8a99;"></i>
<i style="left:943px;top:553px;width:1px;height:1px;background:#7a8a99;"></i>
<i style="left:945px;top:555px;width:1px;height:1px;background:#7a8a99;"></i>
<i style="left:943px;top:557px;width:1px;height:1px;background:#7a8a99;"></i>
<i style="left:945px;top:559px;width:1px;height:1px;background:#7a8a99;"></i>
<i style="left:943px;top:561px;width:1px;height:1px;background:#7a8a99;"></i>
<i style="left:945px;top:563px;width:1px;height:1px;background:#7a8a99;"></i>
<i style="left:943px;top:565px;width:1px;height:1px;background:#7a8a99;"></i>
<i style="left:945px;top:567px;width:1px;height:1px;background:#7a8a99;"></i>
<i style="left:943px;top:569px;width:1px;height:1px;background:#7a8a99;"></i>
<i style="left:945px;top:571px;width:1px;height:1px;background:#7a8a99;"></i>
<i style="left:943px;top:573px;width:1px;height:1px;background:#7a8a99;"></i>
<i style="left:945px;top:575px;width:1px;height:1px;background:#7a8a99;"></i>
<i style="left:943px;top:577px;width:1px;height:1px;background:#7a8a99;"></i>
<i style="left:945px;top:579px;width:1px;height:1px;background:#7a8a99;"></i>
<i style="left:943px;top:581px;width:1px;height:1px;background:#7a8a99;"></i>
<i style="left:945px;top:583px;width:1px;height:1px;background:#7a8a99;"></i>
<i style="left:943px;top:585px;width:1px;height:1px;background:#7a8a99;"></i>
<i style="left:945px;top:587px;width:1px;height:1px;background:#7a8a99;"></i>
<i style="left:943px;top:589px;width:1px;height:1px;background:#7a8a99;"></i>
<i style="left:945px;top:591px;width:1px;height:1px;background:#7a8a99;"></i>
<i style="left:943px;top:593px;width:1px;height:1px;background:#7a8a99;"></i>
<i style="left:945px;top:595px;width:1px;height:1px;background:#7a8a99;"></i>
<i style="left:943px;top:597px;width:1px;height:1px;background:#7a8a99;"></i>
<i style="left:945px;top:599px;width:1px;height:1px;background:#7a8a99;"></i>
<i style="left:943px;top:601px;width:1px;height:1px;background:#7a8a99;"></i>
<i style="left:945px;top:603px;width:1px;height:1px;background:#7a8a99;"></i>
<i style="left:943px;top:605px;width:1px;height:1px;background:#7a8a99;"></i>
<i style="left:945px;top:607px;width:1px;height:1px;background:#7a8a99;"></i>
<i style="left:943px;top:609px;width:1px;height:1px;background:#7a8a99;"></i>
<i style="left:945px;top:611px;width:1px;height:1px;background:#7a8a99;"></i>
<i style="left:943px;top:613px;width:1px;height:1px;background:#7a8a99;"></i>
<i style="left:945px;top:615px;width:1px;height:1px;background:#7a8a99;"></i>
<i style="left:943px;top:617px;width:1px;height:1px;background:#7a8a99;"></i>
<i style="left:945px;top:619px;width:1px;height:1px;background:#7a8a99;"></i>
<i style="left:943px;top:621px;width:1px;height:1px;background:#7a8a99;"></i>
<i style="left:945px;top:623px;width:1px;height:1px;background:#7a8a99;"></i>
<i style="left:943px;top:625px;width:1px;height:1px;background:#7a8a99;"></i>
<i style="left:945px;top:627px;width:1px;height:1px;background:#7a8a99;"></i>
<i style="left:943px;top:629px;width:1px;height:1px;background:#7a8a99;"></i>
<i style="left:945px;top:631px;width:1px;height:1px;background:#7a8a99;"></i>
<i style="left:943px;top:633px;width:1px;height:1px;background:#7a8a99;"></i>
<i style="left:945px;top:635px;width:1px;height:1px;background:#7a8a99;"></i>
<i style="left:943px;top:637px;width:1px;height:1px;background:#7a8a99;"></i>
<i style="left:945px;top:639px;width:1px;height:1px;background:#7a8a99;"></i>
<i style="left:941px;top:8px;width:1px;height:2px;background:#6382bf;"></i>
<i style="left:941px;top:8px;width:1px;height:1px;background:#000;"></i>
<i style="left:942px;top:7px;width:1px;height:4px;background:#6382bf;"></i>
<i style="left:942px;top:7px;width:1px;height:1px;background:#000;"></i>
<i style="left:943px;top:6px;width:1px;height:6px;background:#6382bf;"></i>
<i style="left:943px;top:6px;width:1px;height:1px;background:#000;"></i>
<i style="left:944px;top:5px;width:1px;height:8px;background:#6382bf;"></i>
<i style="left:944px;top:5px;width:1px;height:1px;background:#000;"></i>
<i style="left:941px;top:17px;width:1px;height:8px;background:#000;"></i>
<i style="left:942px;top:18px;width:1px;height:6px;background:#6382bf;"></i>
<i style="left:943px;top:19px;width:1px;height:4px;background:#6382bf;"></i>
<i style="left:944px;top:20px;width:1px;height:2px;background:#6382bf;"></i>
<i style="left:1px;top:640px;width:938px;height:1px;background:#ffffff;"></i>
<i style="left:12px;top:644px;width:1px;height:1px;background:#7a8a99;"></i>
<i style="left:14px;top:646px;width:1px;height:1px;background:#7a8a99;"></i>
<i style="left:16px;top:644px;width:1px;height:1px;background:#7a8a99;"></i>
<i style="left:18px;top:646px;width:1px;height:1px;background:#7a8a99;"></i>
<i style="left:20px;top:644px;width:1px;height:1px;background:#7a8a99;"></i>
<i style="left:22px;top:646px;width:1px;height:1px;background:#7a8a99;"></i>
<i style="left:24px;top:644px;width:1px;height:1px;background:#7a8a99;"></i>
<i style="left:26px;top:646px;width:1px;height:1px;background:#7a8a99;"></i>
<i style="left:28px;top:644px;width:1px;height:1px;background:#7a8a99;"></i>
<i style="left:30px;top:646px;width:1px;height:1px;background:#7a8a99;"></i>
<i style="left:32px;top:644px;width:1px;height:1px;background:#7a8a99;"></i>
<i style="left:34px;top:646px;width:1px;height:1px;background:#7a8a99;"></i>
<i style="left:36px;top:644px;width:1px;height:1px;background:#7a8a99;"></i>
<i style="left:38px;top:646px;width:1px;height:1px;background:#7a8a99;"></i>
<i style="left:40px;top:644px;width:1px;height:1px;background:#7a8a99;"></i>
<i style="left:42px;top:646px;width:1px;height:1px;background:#7a8a99;"></i>
<i style="left:44px;top:644px;width:1px;height:1px;background:#7a8a99;"></i>
<i style="left:46px;top:646px;width:1px;height:1px;background:#7a8a99;"></i>
<i style="left:48px;top:644px;width:1px;height:1px;background:#7a8a99;"></i>
<i style="left:50px;top:646px;width:1px;height:1px;background:#7a8a99;"></i>
<i style="left:52px;top:644px;width:1px;height:1px;background:#7a8a99;"></i>
<i style="left:54px;top:646px;width:1px;height:1px;background:#7a8a99;"></i>
<i style="left:56px;top:644px;width:1px;height:1px;background:#7a8a99;"></i>
<i style="left:58px;top:646px;width:1px;height:1px;background:#7a8a99;"></i>
<i style="left:60px;top:644px;width:1px;height:1px;background:#7a8a99;"></i>
<i style="left:62px;top:646px;width:1px;height:1px;background:#7a8a99;"></i>
<i style="left:64px;top:644px;width:1px;height:1px;background:#7a8a99;"></i>
<i style="left:66px;top:646px;width:1px;height:1px;background:#7a8a99;"></i>
<i style="left:68px;top:644px;width:1px;height:1px;background:#7a8a99;"></i>
<i style="left:70px;top:646px;width:1px;height:1px;background:#7a8a99;"></i>
<i style="left:72px;top:644px;width:1px;height:1px;background:#7a8a99;"></i>
<i style="left:74px;top:646px;width:1px;height:1px;background:#7a8a99;"></i>
<i style="left:76px;top:644px;width:1px;height:1px;background:#7a8a99;"></i>
<i style="left:78px;top:646px;width:1px;height:1px;background:#7a8a99;"></i>
<i style="left:80px;top:644px;width:1px;height:1px;background:#7a8a99;"></i>
<i style="left:82px;top:646px;width:1px;height:1px;background:#7a8a99;"></i>
<i style="left:84px;top:644px;width:1px;height:1px;background:#7a8a99;"></i>
<i style="left:86px;top:646px;width:1px;height:1px;background:#7a8a99;"></i>
<i style="left:88px;top:644px;width:1px;height:1px;background:#7a8a99;"></i>
<i style="left:90px;top:646px;width:1px;height:1px;background:#7a8a99;"></i>
<i style="left:92px;top:644px;width:1px;height:1px;background:#7a8a99;"></i>
<i style="left:94px;top:646px;width:1px;height:1px;background:#7a8a99;"></i>
<i style="left:96px;top:644px;width:1px;height:1px;background:#7a8a99;"></i>
<i style="left:98px;top:646px;width:1px;height:1px;background:#7a8a99;"></i>
<i style="left:100px;top:644px;width:1px;height:1px;background:#7a8a99;"></i>
<i style="left:102px;top:646px;width:1px;height:1px;background:#7a8a99;"></i>
<i style="left:104px;top:644px;width:1px;height:1px;background:#7a8a99;"></i>
<i style="left:106px;top:646px;width:1px;height:1px;background:#7a8a99;"></i>
<i style="left:108px;top:644px;width:1px;height:1px;background:#7a8a99;"></i>
<i style="left:110px;top:646px;width:1px;height:1px;background:#7a8a99;"></i>
<i style="left:112px;top:644px;width:1px;height:1px;background:#7a8a99;"></i>
<i style="left:114px;top:646px;width:1px;height:1px;background:#7a8a99;"></i>
<i style="left:116px;top:644px;width:1px;height:1px;background:#7a8a99;"></i>
<i style="left:118px;top:646px;width:1px;height:1px;background:#7a8a99;"></i>
<i style="left:120px;top:644px;width:1px;height:1px;background:#7a8a99;"></i>
<i style="left:122px;top:646px;width:1px;height:1px;background:#7a8a99;"></i>
<i style="left:124px;top:644px;width:1px;height:1px;background:#7a8a99;"></i>
<i style="left:126px;top:646px;width:1px;height:1px;background:#7a8a99;"></i>
<i style="left:128px;top:644px;width:1px;height:1px;background:#7a8a99;"></i>
<i style="left:130px;top:646px;width:1px;height:1px;background:#7a8a99;"></i>
<i style="left:132px;top:644px;width:1px;height:1px;background:#7a8a99;"></i>
<i style="left:134px;top:646px;width:1px;height:1px;background:#7a8a99;"></i>
<i style="left:136px;top:644px;width:1px;height:1px;background:#7a8a99;"></i>
<i style="left:138px;top:646px;width:1px;height:1px;background:#7a8a99;"></i>
<i style="left:140px;top:644px;width:1px;height:1px;background:#7a8a99;"></i>
<i style="left:142px;top:646px;width:1px;height:1px;background:#7a8a99;"></i>
<i style="left:144px;top:644px;width:1px;height:1px;background:#7a8a99;"></i>
<i style="left:146px;top:646px;width:1px;height:1px;background:#7a8a99;"></i>
<i style="left:148px;top:644px;width:1px;height:1px;background:#7a8a99;"></i>
<i style="left:150px;top:646px;width:1px;height:1px;background:#7a8a99;"></i>
<i style="left:152px;top:644px;width:1px;height:1px;background:#7a8a99;"></i>
<i style="left:154px;top:646px;width:1px;height:1px;background:#7a8a99;"></i>
<i style="left:156px;top:644px;width:1px;height:1px;background:#7a8a99;"></i>
<i style="left:158px;top:646px;width:1px;height:1px;background:#7a8a99;"></i>
<i style="left:160px;top:644px;width:1px;height:1px;background:#7a8a99;"></i>
<i style="left:162px;top:646px;width:1px;height:1px;background:#7a8a99;"></i>
<i style="left:164px;top:644px;width:1px;height:1px;background:#7a8a99;"></i>
<i style="left:166px;top:646px;width:1px;height:1px;background:#7a8a99;"></i>
<i style="left:168px;top:644px;width:1px;height:1px;background:#7a8a99;"></i>
<i style="left:170px;top:646px;width:1px;height:1px;background:#7a8a99;"></i>
<i style="left:172px;top:644px;width:1px;height:1px;background:#7a8a99;"></i>
<i style="left:174px;top:646px;width:1px;height:1px;background:#7a8a99;"></i>
<i style="left:176px;top:644px;width:1px;height:1px;background:#7a8a99;"></i>
<i style="left:178px;top:646px;width:1px;height:1px;background:#7a8a99;"></i>
<i style="left:180px;top:644px;width:1px;height:1px;background:#7a8a99;"></i>
<i style="left:182px;top:646px;width:1px;height:1px;background:#7a8a99;"></i>
<i style="left:184px;top:644px;width:1px;height:1px;background:#7a8a99;"></i>
<i style="left:186px;top:646px;width:1px;height:1px;background:#7a8a99;"></i>
<i style="left:188px;top:644px;width:1px;height:1px;background:#7a8a99;"></i>
<i style="left:190px;top:646px;width:1px;height:1px;background:#7a8a99;"></i>
<i style="left:192px;top:644px;width:1px;height:1px;background:#7a8a99;"></i>
<i style="left:194px;top:646px;width:1px;height:1px;background:#7a8a99;"></i>
<i style="left:196px;top:644px;width:1px;height:1px;background:#7a8a99;"></i>
<i style="left:198px;top:646px;width:1px;height:1px;background:#7a8a99;"></i>
<i style="left:200px;top:644px;width:1px;height:1px;background:#7a8a99;"></i>
<i style="left:202px;top:646px;width:1px;height:1px;background:#7a8a99;"></i>
<i style="left:204px;top:644px;width:1px;height:1px;background:#7a8a99;"></i>
<i style="left:206px;top:646px;width:1px;height:1px;background:#7a8a99;"></i>
<i style="left:208px;top:644px;width:1px;height:1px;background:#7a8a99;"></i>
<i style="left:210px;top:646px;width:1px;height:1px;background:#7a8a99;"></i>
<i style="left:212px;top:644px;width:1px;height:1px;background:#7a8a99;"></i>
<i style="left:214px;top:646px;width:1px;height:1px;background:#7a8a99;"></i>
<i style="left:216px;top:644px;width:1px;height:1px;background:#7a8a99;"></i>
<i style="left:218px;top:646px;width:1px;height:1px;background:#7a8a99;"></i>
<i style="left:220px;top:644px;width:1px;height:1px;background:#7a8a99;"></i>
<i style="left:222px;top:646px;width:1px;height:1px;background:#7a8a99;"></i>
<i style="left:224px;top:644px;width:1px;height:1px;background:#7a8a99;"></i>
<i style="left:226px;top:646px;width:1px;height:1px;background:#7a8a99;"></i>
<i style="left:228px;top:644px;width:1px;height:1px;background:#7a8a99;"></i>
<i style="left:230px;top:646px;width:1px;height:1px;background:#7a8a99;"></i>
<i style="left:232px;top:644px;width:1px;height:1px;background:#7a8a99;"></i>
<i style="left:234px;top:646px;width:1px;height:1px;background:#7a8a99;"></i>
<i style="left:236px;top:644px;width:1px;height:1px;background:#7a8a99;"></i>
<i style="left:238px;top:646px;width:1px;height:1px;background:#7a8a99;"></i>
<i style="left:240px;top:644px;width:1px;height:1px;background:#7a8a99;"></i>
<i style="left:242px;top:646px;width:1px;height:1px;background:#7a8a99;"></i>
<i style="left:244px;top:644px;width:1px;height:1px;background:#7a8a99;"></i>
<i style="left:246px;top:646px;width:1px;height:1px;background:#7a8a99;"></i>
<i style="left:248px;top:644px;width:1px;height:1px;background:#7a8a99;"></i>
<i style="left:250px;top:646px;width:1px;height:1px;background:#7a8a99;"></i>
<i style="left:252px;top:644px;width:1px;height:1px;background:#7a8a99;"></i>
<i style="left:254px;top:646px;width:1px;height:1px;background:#7a8a99;"></i>
<i style="left:256px;top:644px;width:1px;height:1px;background:#7a8a99;"></i>
<i style="left:258px;top:646px;width:1px;height:1px;background:#7a8a99;"></i>
<i style="left:260px;top:644px;width:1px;height:1px;background:#7a8a99;"></i>
<i style="left:262px;top:646px;width:1px;height:1px;background:#7a8a99;"></i>
<i style="left:264px;top:644px;width:1px;height:1px;background:#7a8a99;"></i>
<i style="left:266px;top:646px;width:1px;height:1px;background:#7a8a99;"></i>
<i style="left:268px;top:644px;width:1px;height:1px;background:#7a8a99;"></i>
<i style="left:270px;top:646px;width:1px;height:1px;background:#7a8a99;"></i>
<i style="left:272px;top:644px;width:1px;height:1px;background:#7a8a99;"></i>
<i style="left:274px;top:646px;width:1px;height:1px;background:#7a8a99;"></i>
<i style="left:276px;top:644px;width:1px;height:1px;background:#7a8a99;"></i>
<i style="left:278px;top:646px;width:1px;height:1px;background:#7a8a99;"></i>
<i style="left:280px;top:644px;width:1px;height:1px;background:#7a8a99;"></i>
<i style="left:282px;top:646px;width:1px;height:1px;background:#7a8a99;"></i>
<i style="left:284px;top:644px;width:1px;height:1px;background:#7a8a99;"></i>
<i style="left:286px;top:646px;width:1px;height:1px;background:#7a8a99;"></i>
<i style="left:288px;top:644px;width:1px;height:1px;background:#7a8a99;"></i>
<i style="left:290px;top:646px;width:1px;height:1px;background:#7a8a99;"></i>
<i style="left:292px;top:644px;width:1px;height:1px;background:#7a8a99;"></i>
<i style="left:294px;top:646px;width:1px;height:1px;background:#7a8a99;"></i>
<i style="left:296px;top:644px;width:1px;height:1px;background:#7a8a99;"></i>
<i style="left:298px;top:646px;width:1px;height:1px;background:#7a8a99;"></i>
<i style="left:300px;top:644px;width:1px;height:1px;background:#7a8a99;"></i>
<i style="left:302px;top:646px;width:1px;height:1px;background:#7a8a99;"></i>
<i style="left:304px;top:644px;width:1px;height:1px;background:#7a8a99;"></i>
<i style="left:306px;top:646px;width:1px;height:1px;background:#7a8a99;"></i>
<i style="left:308px;top:644px;width:1px;height:1px;background:#7a8a99;"></i>
<i style="left:310px;top:646px;width:1px;height:1px;background:#7a8a99;"></i>
<i style="left:312px;top:644px;width:1px;height:1px;background:#7a8a99;"></i>
<i style="left:314px;top:646px;width:1px;height:1px;background:#7a8a99;"></i>
<i style="left:316px;top:644px;width:1px;height:1px;background:#7a8a99;"></i>
<i style="left:318px;top:646px;width:1px;height:1px;background:#7a8a99;"></i>
<i style="left:320px;top:644px;width:1px;height:1px;background:#7a8a99;"></i>
<i style="left:322px;top:646px;width:1px;height:1px;background:#7a8a99;"></i>
<i style="left:324px;top:644px;width:1px;height:1px;background:#7a8a99;"></i>
<i style="left:326px;top:646px;width:1px;height:1px;background:#7a8a99;"></i>
<i style="left:328px;top:644px;width:1px;height:1px;background:#7a8a99;"></i>
<i style="left:330px;top:646px;width:1px;height:1px;background:#7a8a99;"></i>
<i style="left:332px;top:644px;width:1px;height:1px;background:#7a8a99;"></i>
<i style="left:334px;top:646px;width:1px;height:1px;background:#7a8a99;"></i>
<i style="left:336px;top:644px;width:1px;height:1px;background:#7a8a99;"></i>
<i style="left:338px;top:646px;width:1px;height:1px;background:#7a8a99;"></i>
<i style="left:340px;top:644px;width:1px;height:1px;background:#7a8a99;"></i>
<i style="left:342px;top:646px;width:1px;height:1px;background:#7a8a99;"></i>
<i style="left:344px;top:644px;width:1px;height:1px;background:#7a8a99;"></i>
<i style="left:346px;top:646px;width:1px;height:1px;background:#7a8a99;"></i>
<i style="left:348px;top:644px;width:1px;height:1px;background:#7a8a99;"></i>
<i style="left:350px;top:646px;width:1px;height:1px;background:#7a8a99;"></i>
<i style="left:352px;top:644px;width:1px;height:1px;background:#7a8a99;"></i>
<i style="left:354px;top:646px;width:1px;height:1px;background:#7a8a99;"></i>
<i style="left:356px;top:644px;width:1px;height:1px;background:#7a8a99;"></i>
<i style="left:358px;top:646px;width:1px;height:1px;background:#7a8a99;"></i>
<i style="left:360px;top:644px;width:1px;height:1px;background:#7a8a99;"></i>
<i style="left:362px;top:646px;width:1px;height:1px;background:#7a8a99;"></i>
<i style="left:364px;top:644px;width:1px;height:1px;background:#7a8a99;"></i>
<i style="left:366px;top:646px;width:1px;height:1px;background:#7a8a99;"></i>
<i style="left:368px;top:644px;width:1px;height:1px;background:#7a8a99;"></i>
<i style="left:370px;top:646px;width:1px;height:1px;background:#7a8a99;"></i>
<i style="left:372px;top:644px;width:1px;height:1px;background:#7a8a99;"></i>
<i style="left:374px;top:646px;width:1px;height:1px;background:#7a8a99;"></i>
<i style="left:376px;top:644px;width:1px;height:1px;background:#7a8a99;"></i>
<i style="left:378px;top:646px;width:1px;height:1px;background:#7a8a99;"></i>
<i style="left:380px;top:644px;width:1px;height:1px;background:#7a8a99;"></i>
<i style="left:382px;top:646px;width:1px;height:1px;background:#7a8a99;"></i>
<i style="left:384px;top:644px;width:1px;height:1px;background:#7a8a99;"></i>
<i style="left:386px;top:646px;width:1px;height:1px;background:#7a8a99;"></i>
<i style="left:388px;top:644px;width:1px;height:1px;background:#7a8a99;"></i>
<i style="left:390px;top:646px;width:1px;height:1px;background:#7a8a99;"></i>
<i style="left:392px;top:644px;width:1px;height:1px;background:#7a8a99;"></i>
<i style="left:394px;top:646px;width:1px;height:1px;background:#7a8a99;"></i>
<i style="left:396px;top:644px;width:1px;height:1px;background:#7a8a99;"></i>
<i style="left:398px;top:646px;width:1px;height:1px;background:#7a8a99;"></i>
<i style="left:400px;top:644px;width:1px;height:1px;background:#7a8a99;"></i>
<i style="left:402px;top:646px;width:1px;height:1px;background:#7a8a99;"></i>
<i style="left:404px;top:644px;width:1px;height:1px;background:#7a8a99;"></i>
<i style="left:406px;top:646px;width:1px;height:1px;background:#7a8a99;"></i>
<i style="left:408px;top:644px;width:1px;height:1px;background:#7a8a99;"></i>
<i style="left:410px;top:646px;width:1px;height:1px;background:#7a8a99;"></i>
<i style="left:412px;top:644px;width:1px;height:1px;background:#7a8a99;"></i>
<i style="left:414px;top:646px;width:1px;height:1px;background:#7a8a99;"></i>
<i style="left:416px;top:644px;width:1px;height:1px;background:#7a8a99;"></i>
<i style="left:418px;top:646px;width:1px;height:1px;background:#7a8a99;"></i>
<i style="left:420px;top:644px;width:1px;height:1px;background:#7a8a99;"></i>
<i style="left:422px;top:646px;width:1px;height:1px;background:#7a8a99;"></i>
<i style="left:424px;top:644px;width:1px;height:1px;background:#7a8a99;"></i>
<i style="left:426px;top:646px;width:1px;height:1px;background:#7a8a99;"></i>
<i style="left:428px;top:644px;width:1px;height:1px;background:#7a8a99;"></i>
<i style="left:430px;top:646px;width:1px;height:1px;background:#7a8a99;"></i>
<i style="left:432px;top:644px;width:1px;height:1px;background:#7a8a99;"></i>
<i style="left:434px;top:646px;width:1px;height:1px;background:#7a8a99;"></i>
<i style="left:436px;top:644px;width:1px;height:1px;background:#7a8a99;"></i>
<i style="left:438px;top:646px;width:1px;height:1px;background:#7a8a99;"></i>
<i style="left:440px;top:644px;width:1px;height:1px;background:#7a8a99;"></i>
<i style="left:442px;top:646px;width:1px;height:1px;background:#7a8a99;"></i>
<i style="left:444px;top:644px;width:1px;height:1px;background:#7a8a99;"></i>
<i style="left:446px;top:646px;width:1px;height:1px;background:#7a8a99;"></i>
<i style="left:448px;top:644px;width:1px;height:1px;background:#7a8a99;"></i>
<i style="left:450px;top:646px;width:1px;height:1px;background:#7a8a99;"></i>
<i style="left:452px;top:644px;width:1px;height:1px;background:#7a8a99;"></i>
<i style="left:454px;top:646px;width:1px;height:1px;background:#7a8a99;"></i>
<i style="left:456px;top:644px;width:1px;height:1px;background:#7a8a99;"></i>
<i style="left:458px;top:646px;width:1px;height:1px;background:#7a8a99;"></i>
<i style="left:460px;top:644px;width:1px;height:1px;background:#7a8a99;"></i>
<i style="left:462px;top:646px;width:1px;height:1px;background:#7a8a99;"></i>
<i style="left:464px;top:644px;width:1px;height:1px;background:#7a8a99;"></i>
<i style="left:466px;top:646px;width:1px;height:1px;background:#7a8a99;"></i>
<i style="left:468px;top:644px;width:1px;height:1px;background:#7a8a99;"></i>
<i style="left:470px;top:646px;width:1px;height:1px;background:#7a8a99;"></i>
<i style="left:472px;top:644px;width:1px;height:1px;background:#7a8a99;"></i>
<i style="left:474px;top:646px;width:1px;height:1px;background:#7a8a99;"></i>
<i style="left:476px;top:644px;width:1px;height:1px;background:#7a8a99;"></i>
<i style="left:478px;top:646px;width:1px;height:1px;background:#7a8a99;"></i>
<i style="left:480px;top:644px;width:1px;height:1px;background:#7a8a99;"></i>
<i style="left:482px;top:646px;width:1px;height:1px;background:#7a8a99;"></i>
<i style="left:484px;top:644px;width:1px;height:1px;background:#7a8a99;"></i>
<i style="left:486px;top:646px;width:1px;height:1px;background:#7a8a99;"></i>
<i style="left:488px;top:644px;width:1px;height:1px;background:#7a8a99;"></i>
<i style="left:490px;top:646px;width:1px;height:1px;background:#7a8a99;"></i>
<i style="left:492px;top:644px;width:1px;height:1px;background:#7a8a99;"></i>
<i style="left:494px;top:646px;width:1px;height:1px;background:#7a8a99;"></i>
<i style="left:496px;top:644px;width:1px;height:1px;background:#7a8a99;"></i>
<i style="left:498px;top:646px;width:1px;height:1px;background:#7a8a99;"></i>
<i style="left:500px;top:644px;width:1px;height:1px;background:#7a8a99;"></i>
<i style="left:502px;top:646px;width:1px;height:1px;background:#7a8a99;"></i>
<i style="left:504px;top:644px;width:1px;height:1px;background:#7a8a99;"></i>
<i style="left:506px;top:646px;width:1px;height:1px;background:#7a8a99;"></i>
<i style="left:508px;top:644px;width:1px;height:1px;background:#7a8a99;"></i>
<i style="left:510px;top:646px;width:1px;height:1px;background:#7a8a99;"></i>
<i style="left:512px;top:644px;width:1px;height:1px;background:#7a8a99;"></i>
<i style="left:514px;top:646px;width:1px;height:1px;background:#7a8a99;"></i>
<i style="left:516px;top:644px;width:1px;height:1px;background:#7a8a99;"></i>
<i style="left:518px;top:646px;width:1px;height:1px;background:#7a8a99;"></i>
<i style="left:520px;top:644px;width:1px;height:1px;background:#7a8a99;"></i>
<i style="left:522px;top:646px;width:1px;height:1px;background:#7a8a99;"></i>
<i style="left:524px;top:644px;width:1px;height:1px;background:#7a8a99;"></i>
<i style="left:526px;top:646px;width:1px;height:1px;background:#7a8a99;"></i>
<i style="left:528px;top:644px;width:1px;height:1px;background:#7a8a99;"></i>
<i style="left:530px;top:646px;width:1px;height:1px;background:#7a8a99;"></i>
<i style="left:532px;top:644px;width:1px;height:1px;background:#7a8a99;"></i>
<i style="left:534px;top:646px;width:1px;height:1px;background:#7a8a99;"></i>
<i style="left:536px;top:644px;width:1px;height:1px;background:#7a8a99;"></i>
<i style="left:538px;top:646px;width:1px;height:1px;background:#7a8a99;"></i>
<i style="left:540px;top:644px;width:1px;height:1px;background:#7a8a99;"></i>
<i style="left:542px;top:646px;width:1px;height:1px;background:#7a8a99;"></i>
<i style="left:544px;top:644px;width:1px;height:1px;background:#7a8a99;"></i>
<i style="left:546px;top:646px;width:1px;height:1px;background:#7a8a99;"></i>
<i style="left:548px;top:644px;width:1px;height:1px;background:#7a8a99;"></i>
<i style="left:550px;top:646px;width:1px;height:1px;background:#7a8a99;"></i>
<i style="left:552px;top:644px;width:1px;height:1px;background:#7a8a99;"></i>
<i style="left:554px;top:646px;width:1px;height:1px;background:#7a8a99;"></i>
<i style="left:556px;top:644px;width:1px;height:1px;background:#7a8a99;"></i>
<i style="left:558px;top:646px;width:1px;height:1px;background:#7a8a99;"></i>
<i style="left:560px;top:644px;width:1px;height:1px;background:#7a8a99;"></i>
<i style="left:562px;top:646px;width:1px;height:1px;background:#7a8a99;"></i>
<i style="left:564px;top:644px;width:1px;height:1px;background:#7a8a99;"></i>
<i style="left:566px;top:646px;width:1px;height:1px;background:#7a8a99;"></i>
<i style="left:568px;top:644px;width:1px;height:1px;background:#7a8a99;"></i>
<i style="left:570px;top:646px;width:1px;height:1px;background:#7a8a99;"></i>
<i style="left:572px;top:644px;width:1px;height:1px;background:#7a8a99;"></i>
<i style="left:574px;top:646px;width:1px;height:1px;background:#7a8a99;"></i>
<i style="left:576px;top:644px;width:1px;height:1px;background:#7a8a99;"></i>
<i style="left:578px;top:646px;width:1px;height:1px;background:#7a8a99;"></i>
<i style="left:580px;top:644px;width:1px;height:1px;background:#7a8a99;"></i>
<i style="left:582px;top:646px;width:1px;height:1px;background:#7a8a99;"></i>
<i style="left:584px;top:644px;width:1px;height:1px;background:#7a8a99;"></i>
<i style="left:586px;top:646px;width:1px;height:1px;background:#7a8a99;"></i>
<i style="left:588px;top:644px;width:1px;height:1px;background:#7a8a99;"></i>
<i style="left:590px;top:646px;width:1px;height:1px;background:#7a8a99;"></i>
<i style="left:592px;top:644px;width:1px;height:1px;background:#7a8a99;"></i>
<i style="left:594px;top:646px;width:1px;height:1px;background:#7a8a99;"></i>
<i style="left:596px;top:644px;width:1px;height:1px;background:#7a8a99;"></i>
<i style="left:598px;top:646px;width:1px;height:1px;background:#7a8a99;"></i>
<i style="left:600px;top:644px;width:1px;height:1px;background:#7a8a99;"></i>
<i style="left:602px;top:646px;width:1px;height:1px;background:#7a8a99;"></i>
<i style="left:604px;top:644px;width:1px;height:1px;background:#7a8a99;"></i>
<i style="left:606px;top:646px;width:1px;height:1px;background:#7a8a99;"></i>
<i style="left:608px;top:644px;width:1px;height:1px;background:#7a8a99;"></i>
<i style="left:610px;top:646px;width:1px;height:1px;background:#7a8a99;"></i>
<i style="left:612px;top:644px;width:1px;height:1px;background:#7a8a99;"></i>
<i style="left:614px;top:646px;width:1px;height:1px;background:#7a8a99;"></i>
<i style="left:616px;top:644px;width:1px;height:1px;background:#7a8a99;"></i>
<i style="left:618px;top:646px;width:1px;height:1px;background:#7a8a99;"></i>
<i style="left:620px;top:644px;width:1px;height:1px;background:#7a8a99;"></i>
<i style="left:622px;top:646px;width:1px;height:1px;background:#7a8a99;"></i>
<i style="left:624px;top:644px;width:1px;height:1px;background:#7a8a99;"></i>
<i style="left:626px;top:646px;width:1px;height:1px;background:#7a8a99;"></i>
<i style="left:628px;top:644px;width:1px;height:1px;background:#7a8a99;"></i>
<i style="left:630px;top:646px;width:1px;height:1px;background:#7a8a99;"></i>
<i style="left:632px;top:644px;width:1px;height:1px;background:#7a8a99;"></i>
<i style="left:634px;top:646px;width:1px;height:1px;background:#7a8a99;"></i>
<i style="left:636px;top:644px;width:1px;height:1px;background:#7a8a99;"></i>
<i style="left:638px;top:646px;width:1px;height:1px;background:#7a8a99;"></i>
<i style="left:640px;top:644px;width:1px;height:1px;background:#7a8a99;"></i>
<i style="left:642px;top:646px;width:1px;height:1px;background:#7a8a99;"></i>
<i style="left:644px;top:644px;width:1px;height:1px;background:#7a8a99;"></i>
<i style="left:646px;top:646px;width:1px;height:1px;background:#7a8a99;"></i>
<i style="left:648px;top:644px;width:1px;height:1px;background:#7a8a99;"></i>
<i style="left:650px;top:646px;width:1px;height:1px;background:#7a8a99;"></i>
<i style="left:652px;top:644px;width:1px;height:1px;background:#7a8a99;"></i>
<i style="left:654px;top:646px;width:1px;height:1px;background:#7a8a99;"></i>
<i style="left:656px;top:644px;width:1px;height:1px;background:#7a8a99;"></i>
<i style="left:658px;top:646px;width:1px;height:1px;background:#7a8a99;"></i>
<i style="left:660px;top:644px;width:1px;height:1px;background:#7a8a99;"></i>
<i style="left:662px;top:646px;width:1px;height:1px;background:#7a8a99;"></i>
<i style="left:664px;top:644px;width:1px;height:1px;background:#7a8a99;"></i>
<i style="left:666px;top:646px;width:1px;height:1px;background:#7a8a99;"></i>
<i style="left:668px;top:644px;width:1px;height:1px;background:#7a8a99;"></i>
<i style="left:670px;top:646px;width:1px;height:1px;background:#7a8a99;"></i>
<i style="left:672px;top:644px;width:1px;height:1px;background:#7a8a99;"></i>
<i style="left:674px;top:646px;width:1px;height:1px;background:#7a8a99;"></i>
<i style="left:676px;top:644px;width:1px;height:1px;background:#7a8a99;"></i>
<i style="left:678px;top:646px;width:1px;height:1px;background:#7a8a99;"></i>
<i style="left:680px;top:644px;width:1px;height:1px;background:#7a8a99;"></i>
<i style="left:682px;top:646px;width:1px;height:1px;background:#7a8a99;"></i>
<i style="left:684px;top:644px;width:1px;height:1px;background:#7a8a99;"></i>
<i style="left:686px;top:646px;width:1px;height:1px;background:#7a8a99;"></i>
<i style="left:688px;top:644px;width:1px;height:1px;background:#7a8a99;"></i>
<i style="left:690px;top:646px;width:1px;height:1px;background:#7a8a99;"></i>
<i style="left:692px;top:644px;width:1px;height:1px;background:#7a8a99;"></i>
<i style="left:694px;top:646px;width:1px;height:1px;background:#7a8a99;"></i>
<i style="left:696px;top:644px;width:1px;height:1px;background:#7a8a99;"></i>
<i style="left:698px;top:646px;width:1px;height:1px;background:#7a8a99;"></i>
<i style="left:700px;top:644px;width:1px;height:1px;background:#7a8a99;"></i>
<i style="left:702px;top:646px;width:1px;height:1px;background:#7a8a99;"></i>
<i style="left:704px;top:644px;width:1px;height:1px;background:#7a8a99;"></i>
<i style="left:706px;top:646px;width:1px;height:1px;background:#7a8a99;"></i>
<i style="left:708px;top:644px;width:1px;height:1px;background:#7a8a99;"></i>
<i style="left:710px;top:646px;width:1px;height:1px;background:#7a8a99;"></i>
<i style="left:712px;top:644px;width:1px;height:1px;background:#7a8a99;"></i>
<i style="left:714px;top:646px;width:1px;height:1px;background:#7a8a99;"></i>
<i style="left:716px;top:644px;width:1px;height:1px;background:#7a8a99;"></i>
<i style="left:718px;top:646px;width:1px;height:1px;background:#7a8a99;"></i>
<i style="left:720px;top:644px;width:1px;height:1px;background:#7a8a99;"></i>
<i style="left:722px;top:646px;width:1px;height:1px;background:#7a8a99;"></i>
<i style="left:724px;top:644px;width:1px;height:1px;background:#7a8a99;"></i>
<i style="left:726px;top:646px;width:1px;height:1px;background:#7a8a99;"></i>
<i style="left:728px;top:644px;width:1px;height:1px;background:#7a8a99;"></i>
<i style="left:730px;top:646px;width:1px;height:1px;background:#7a8a99;"></i>
<i style="left:732px;top:644px;width:1px;height:1px;background:#7a8a99;"></i>
<i style="left:734px;top:646px;width:1px;height:1px;background:#7a8a99;"></i>
<i style="left:736px;top:644px;width:1px;height:1px;background:#7a8a99;"></i>
<i style="left:738px;top:646px;width:1px;height:1px;background:#7a8a99;"></i>
<i style="left:740px;top:644px;width:1px;height:1px;background:#7a8a99;"></i>
<i style="left:742px;top:646px;width:1px;height:1px;background:#7a8a99;"></i>
<i style="left:744px;top:644px;width:1px;height:1px;background:#7a8a99;"></i>
<i style="left:746px;top:646px;width:1px;height:1px;background:#7a8a99;"></i>
<i style="left:748px;top:644px;width:1px;height:1px;background:#7a8a99;"></i>
<i style="left:750px;top:646px;width:1px;height:1px;background:#7a8a99;"></i>
<i style="left:752px;top:644px;width:1px;height:1px;background:#7a8a99;"></i>
<i style="left:754px;top:646px;width:1px;height:1px;background:#7a8a99;"></i>
<i style="left:756px;top:644px;width:1px;height:1px;background:#7a8a99;"></i>
<i style="left:758px;top:646px;width:1px;height:1px;background:#7a8a99;"></i>
<i style="left:760px;top:644px;width:1px;height:1px;background:#7a8a99;"></i>
<i style="left:762px;top:646px;width:1px;height:1px;background:#7a8a99;"></i>
<i style="left:764px;top:644px;width:1px;height:1px;background:#7a8a99;"></i>
<i style="left:766px;top:646px;width:1px;height:1px;background:#7a8a99;"></i>
<i style="left:768px;top:644px;width:1px;height:1px;background:#7a8a99;"></i>
<i style="left:770px;top:646px;width:1px;height:1px;background:#7a8a99;"></i>
<i style="left:772px;top:644px;width:1px;height:1px;background:#7a8a99;"></i>
<i style="left:774px;top:646px;width:1px;height:1px;background:#7a8a99;"></i>
<i style="left:776px;top:644px;width:1px;height:1px;background:#7a8a99;"></i>
<i style="left:778px;top:646px;width:1px;height:1px;background:#7a8a99;"></i>
<i style="left:780px;top:644px;width:1px;height:1px;background:#7a8a99;"></i>
<i style="left:782px;top:646px;width:1px;height:1px;background:#7a8a99;"></i>
<i style="left:784px;top:644px;width:1px;height:1px;background:#7a8a99;"></i>
<i style="left:786px;top:646px;width:1px;height:1px;background:#7a8a99;"></i>
<i style="left:788px;top:644px;width:1px;height:1px;background:#7a8a99;"></i>
<i style="left:790px;top:646px;width:1px;height:1px;background:#7a8a99;"></i>
<i style="left:792px;top:644px;width:1px;height:1px;background:#7a8a99;"></i>
<i style="left:794px;top:646px;width:1px;height:1px;background:#7a8a99;"></i>
<i style="left:796px;top:644px;width:1px;height:1px;background:#7a8a99;"></i>
<i style="left:798px;top:646px;width:1px;height:1px;background:#7a8a99;"></i>
<i style="left:800px;top:644px;width:1px;height:1px;background:#7a8a99;"></i>
<i style="left:802px;top:646px;width:1px;height:1px;background:#7a8a99;"></i>
<i style="left:804px;top:644px;width:1px;height:1px;background:#7a8a99;"></i>
<i style="left:806px;top:646px;width:1px;height:1px;background:#7a8a99;"></i>
<i style="left:808px;top:644px;width:1px;height:1px;background:#7a8a99;"></i>
<i style="left:810px;top:646px;width:1px;height:1px;background:#7a8a99;"></i>
<i style="left:812px;top:644px;width:1px;height:1px;background:#7a8a99;"></i>
<i style="left:814px;top:646px;width:1px;height:1px;background:#7a8a99;"></i>
<i style="left:816px;top:644px;width:1px;height:1px;background:#7a8a99;"></i>
<i style="left:818px;top:646px;width:1px;height:1px;background:#7a8a99;"></i>
<i style="left:820px;top:644px;width:1px;height:1px;background:#7a8a99;"></i>
<i style="left:822px;top:646px;width:1px;height:1px;background:#7a8a99;"></i>
<i style="left:824px;top:644px;width:1px;height:1px;background:#7a8a99;"></i>
<i style="left:826px;top:646px;width:1px;height:1px;background:#7a8a99;"></i>
<i style="left:828px;top:644px;width:1px;height:1px;background:#7a8a99;"></i>
<i style="left:830px;top:646px;width:1px;height:1px;background:#7a8a99;"></i>
<i style="left:832px;top:644px;width:1px;height:1px;background:#7a8a99;"></i>
<i style="left:834px;top:646px;width:1px;height:1px;background:#7a8a99;"></i>
<i style="left:836px;top:644px;width:1px;height:1px;background:#7a8a99;"></i>
<i style="left:838px;top:646px;width:1px;height:1px;background:#7a8a99;"></i>
<i style="left:840px;top:644px;width:1px;height:1px;background:#7a8a99;"></i>
<i style="left:842px;top:646px;width:1px;height:1px;background:#7a8a99;"></i>
<i style="left:844px;top:644px;width:1px;height:1px;background:#7a8a99;"></i>
<i style="left:846px;top:646px;width:1px;height:1px;background:#7a8a99;"></i>
<i style="left:848px;top:644px;width:1px;height:1px;background:#7a8a99;"></i>
<i style="left:850px;top:646px;width:1px;height:1px;background:#7a8a99;"></i>
<i style="left:852px;top:644px;width:1px;height:1px;background:#7a8a99;"></i>
<i style="left:854px;top:646px;width:1px;height:1px;background:#7a8a99;"></i>
<i style="left:856px;top:644px;width:1px;height:1px;background:#7a8a99;"></i>
<i style="left:858px;top:646px;width:1px;height:1px;background:#7a8a99;"></i>
<i style="left:860px;top:644px;width:1px;height:1px;background:#7a8a99;"></i>
<i style="left:862px;top:646px;width:1px;height:1px;background:#7a8a99;"></i>
<i style="left:864px;top:644px;width:1px;height:1px;background:#7a8a99;"></i>
<i style="left:866px;top:646px;width:1px;height:1px;background:#7a8a99;"></i>
<i style="left:868px;top:644px;width:1px;height:1px;background:#7a8a99;"></i>
<i style="left:870px;top:646px;width:1px;height:1px;background:#7a8a99;"></i>
<i style="left:872px;top:644px;width:1px;height:1px;background:#7a8a99;"></i>
<i style="left:874px;top:646px;width:1px;height:1px;background:#7a8a99;"></i>
<i style="left:876px;top:644px;width:1px;height:1px;background:#7a8a99;"></i>
<i style="left:878px;top:646px;width:1px;height:1px;background:#7a8a99;"></i>
<i style="left:880px;top:644px;width:1px;height:1px;background:#7a8a99;"></i>
<i style="left:882px;top:646px;width:1px;height:1px;background:#7a8a99;"></i>
<i style="left:884px;top:644px;width:1px;height:1px;background:#7a8a99;"></i>
<i style="left:886px;top:646px;width:1px;height:1px;background:#7a8a99;"></i>
<i style="left:888px;top:644px;width:1px;height:1px;background:#7a8a99;"></i>
<i style="left:890px;top:646px;width:1px;height:1px;background:#7a8a99;"></i>
<i style="left:892px;top:644px;width:1px;height:1px;background:#7a8a99;"></i>
<i style="left:894px;top:646px;width:1px;height:1px;background:#7a8a99;"></i>
<i style="left:896px;top:644px;width:1px;height:1px;background:#7a8a99;"></i>
<i style="left:898px;top:646px;width:1px;height:1px;background:#7a8a99;"></i>
<i style="left:900px;top:644px;width:1px;height:1px;background:#7a8a99;"></i>
<i style="left:902px;top:646px;width:1px;height:1px;background:#7a8a99;"></i>
<i style="left:904px;top:644px;width:1px;height:1px;background:#7a8a99;"></i>
<i style="left:906px;top:646px;width:1px;height:1px;background:#7a8a99;"></i>
<i style="left:908px;top:644px;width:1px;height:1px;background:#7a8a99;"></i>
<i style="left:910px;top:646px;width:1px;height:1px;background:#7a8a99;"></i>
<i style="left:912px;top:644px;width:1px;height:1px;background:#7a8a99;"></i>
<i style="left:914px;top:646px;width:1px;height:1px;background:#7a8a99;"></i>
<i style="left:916px;top:644px;width:1px;height:1px;background:#7a8a99;"></i>
<i style="left:918px;top:646px;width:1px;height:1px;background:#7a8a99;"></i>
<i style="left:920px;top:644px;width:1px;height:1px;background:#7a8a99;"></i>
<i style="left:922px;top:646px;width:1px;height:1px;background:#7a8a99;"></i>
<i style="left:924px;top:644px;width:1px;height:1px;background:#7a8a99;"></i>
<i style="left:926px;top:646px;width:1px;height:1px;background:#7a8a99;"></i>
<i style="left:928px;top:644px;width:1px;height:1px;background:#7a8a99;"></i>
<i style="left:930px;top:646px;width:1px;height:1px;background:#7a8a99;"></i>
<i style="left:932px;top:644px;width:1px;height:1px;background:#7a8a99;"></i>
<i style="left:934px;top:646px;width:1px;height:1px;background:#7a8a99;"></i>
<i style="left:7px;top:642px;width:2px;height:1px;background:#6382bf;"></i>
<i style="left:7px;top:642px;width:1px;height:1px;background:#000;"></i>
<i style="left:6px;top:643px;width:4px;height:1px;background:#6382bf;"></i>
<i style="left:6px;top:643px;width:1px;height:1px;background:#000;"></i>
<i style="left:5px;top:644px;width:6px;height:1px;background:#6382bf;"></i>
<i style="left:5px;top:644px;width:1px;height:1px;background:#000;"></i>
<i style="left:4px;top:645px;width:8px;height:1px;background:#6382bf;"></i>
<i style="left:4px;top:645px;width:1px;height:1px;background:#000;"></i>
<i style="left:16px;top:642px;width:8px;height:1px;background:#000;"></i>
<i style="left:17px;top:643px;width:6px;height:1px;background:#6382bf;"></i>
<i style="left:18px;top:644px;width:4px;height:1px;background:#6382bf;"></i>
<i style="left:19px;top:645px;width:2px;height:1px;background:#6382bf;"></i>
<i style="left:0px;top:649px;width:939px;height:1px;background:#7a8a99;"></i>
<i style="left:0px;top:649px;width:1px;height:3px;background:#7a8a99;"></i>
<i style="left:1px;top:650px;width:938px;height:1px;background:#ffffff;"></i>
<i style="left:940px;top:640px;width:7px;height:12px;background:#eeeeee;"></i>
<i style="left:943px;top:641px;width:1px;height:1px;background:#7a8a99;"></i>
<i style="left:945px;top:643px;width:1px;height:1px;background:#7a8a99;"></i>
<i style="left:943px;top:645px;width:1px;height:1px;background:#7a8a99;"></i>
<i style="left:945px;top:647px;width:1px;height:1px;background:#7a8a99;"></i>
<i style="left:943px;top:649px;width:1px;height:1px;background:#7a8a99;"></i>
<i style="left:945px;top:651px;width:1px;height:1px;background:#7a8a99;"></i>
<div class=tb style="left:14px;top:3px;color:#000">Edit</div>
<div class=tb style="left:55px;top:3px;color:#000">Execute</div>
<div class=tb style="left:16px;top:28px;color:#222">p1.asm</div>
</body></html>
